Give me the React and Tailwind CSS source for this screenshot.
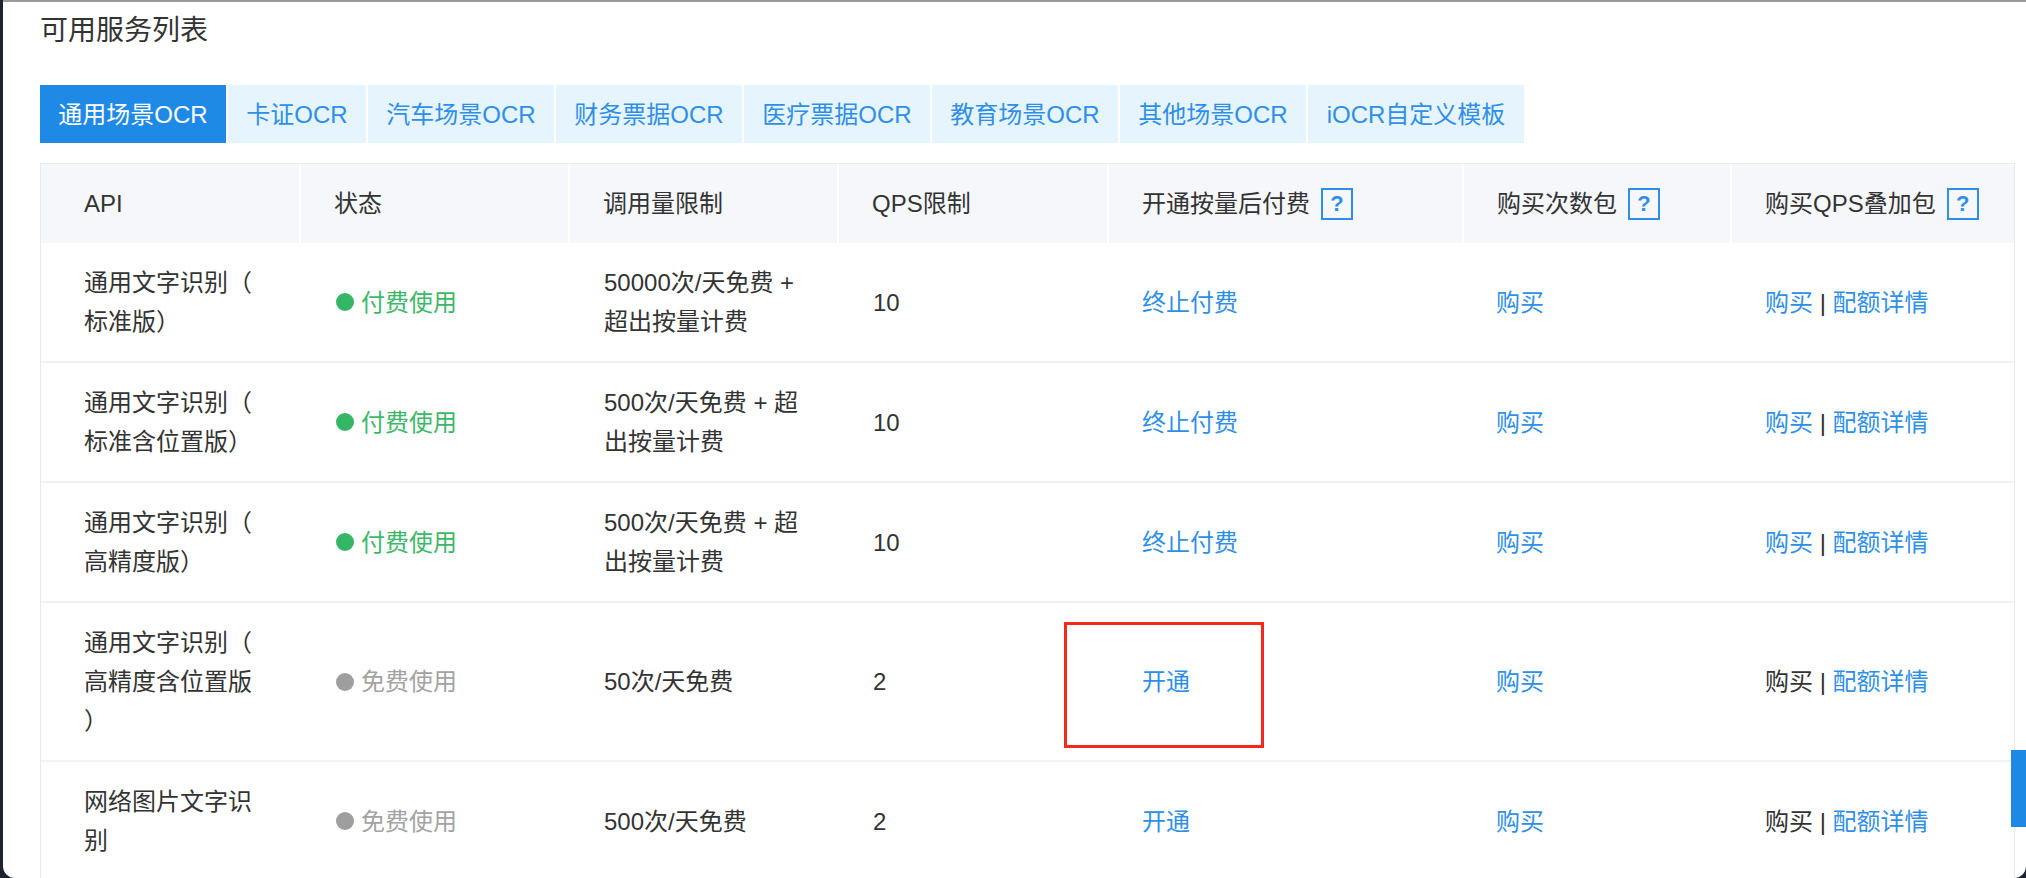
// Service list page (OCR API table)

const TABS = [
  { label: '通用场景OCR', w: 'w-[186px]', active: true },
  { label: '卡证OCR', w: 'w-[138px]' },
  { label: '汽车场景OCR', w: 'w-[186px]' },
  { label: '财务票据OCR', w: 'w-[186px]' },
  { label: '医疗票据OCR', w: 'w-[186px]' },
  { label: '教育场景OCR', w: 'w-[186px]' },
  { label: '其他场景OCR', w: 'w-[186px]' },
  { label: 'iOCR自定义模板', w: 'w-[216px]' },
];

const ROWS = [
  {
    name: ['通用文字识别（', '标准版）'],
    paid: true,
    limit: ['50000次/天免费 +', '超出按量计费'],
    qps: '10',
    action: '终止付费',
  },
  {
    name: ['通用文字识别（', '标准含位置版）'],
    paid: true,
    limit: ['500次/天免费 + 超', '出按量计费'],
    qps: '10',
    action: '终止付费',
  },
  {
    name: ['通用文字识别（', '高精度版）'],
    paid: true,
    limit: ['500次/天免费 + 超', '出按量计费'],
    qps: '10',
    action: '终止付费',
  },
  {
    name: ['通用文字识别（', '高精度含位置版', '）'],
    paid: false,
    limit: ['50次/天免费'],
    qps: '2',
    action: '开通',
    marked: true,
  },
  {
    name: ['网络图片文字识', '别'],
    paid: false,
    limit: ['500次/天免费'],
    qps: '2',
    action: '开通',
  },
];

const GRID = 'grid grid-cols-[260px_269px_269px_270px_355px_268px_284px]';
const LINK = 'text-[#2f8fe6]';

function HelpBox() {
  return (
    <span className="ml-[11px] w-8 h-8 border-2 border-[#2f8fe6] text-[#2f8fe6] font-bold text-[22px] leading-none flex items-center justify-center">
      ?
    </span>
  );
}

function Lines({ lines }) {
  return (
    <div>
      {lines.map((l, i) => (
        <div key={i}>{l}</div>
      ))}
    </div>
  );
}

function HeaderRow() {
  const cell = 'flex items-center py-5 border-r-2 border-white';
  return (
    <div className={`${GRID} bg-[#f5f7fa] border-t border-[#e8eaee] text-[#333]`}>
      <div className={`${cell} pl-[43px]`}>API</div>
      <div className={`${cell} pl-[33px]`}>状态</div>
      <div className={`${cell} pl-[33px]`}>调用量限制</div>
      <div className={`${cell} pl-[33px]`}>QPS限制</div>
      <div className={`${cell} pl-[33px]`}>
        开通按量后付费
        <HelpBox />
      </div>
      <div className={`${cell} pl-[33px]`}>
        购买次数包
        <HelpBox />
      </div>
      <div className="flex items-center py-5 pl-[33px]">
        购买QPS叠加包
        <HelpBox />
      </div>
    </div>
  );
}

function Row({ row }) {
  const cell = 'flex items-center py-5';
  return (
    <div className={`${GRID} border-b-2 border-[#eef1f6] text-[#333]`}>
      <div className={`${cell} pl-[43px] pr-[40px]`}>
        <Lines lines={row.name} />
      </div>
      <div className={`${cell} pl-[35px]`}>
        <span
          className={`w-[18px] h-[18px] rounded-full mr-[7px] ${
            row.paid ? 'bg-[#35b665]' : 'bg-[#9e9e9e]'
          }`}
        />
        <span className={row.paid ? 'text-[#3db868]' : 'text-[#a3a3a3]'}>
          {row.paid ? '付费使用' : '免费使用'}
        </span>
      </div>
      <div className={`${cell} pl-[34px]`}>
        <Lines lines={row.limit} />
      </div>
      <div className={`${cell} pl-[34px]`}>{row.qps}</div>
      <div className={`${cell} pl-[33px] relative`}>
        <span className={LINK}>{row.action}</span>
        {row.marked && (
          <div className="absolute left-[-45px] top-[19px] w-[200px] h-[126px] border-[3px] border-[#f5281c]" />
        )}
      </div>
      <div className={`${cell} pl-[32px]`}>
        <span className={LINK}>购买</span>
      </div>
      <div className={`${cell} pl-[33px] whitespace-pre`}>
        <span className={row.paid ? LINK : 'text-[#333]'}>购买</span>
        <span className="text-[#333]"> | </span>
        <span className={LINK}>配额详情</span>
      </div>
    </div>
  );
}

export default function App() {
  return (
    <div className="w-full h-[878px] bg-[#1c2331] overflow-hidden font-['Liberation_Sans','Noto_Sans_CJK_SC',sans-serif] text-[24px] leading-[39px]">
      <div className="relative ml-[3px] h-full bg-white border-t-2 border-[#9b9b9b] rounded-bl-[12px] rounded-br-[12px] overflow-hidden">
        <div className="pl-[37px]">
          <h1 className="mt-[9px] h-[40px] text-[28px] leading-[40px] text-[#333]">可用服务列表</h1>

          <div className="mt-[34px] flex gap-[2px]">
            {TABS.map((t) => (
              <div
                key={t.label}
                className={`${t.w} h-[58px] flex items-center justify-center ${
                  t.active ? 'bg-[#1f8ae6] text-white' : 'bg-[#e6f4fe] text-[#2f8fe6]'
                }`}
              >
                {t.label}
              </div>
            ))}
          </div>

          <div className="mt-[20px] w-[1975px] border-x border-[#e8eaee]">
            <HeaderRow />
            {ROWS.map((r, i) => (
              <Row key={i} row={r} />
            ))}
          </div>
        </div>

        {/* floating side tab */}
        <div className="absolute right-0 top-[748px] w-[15px] h-[77px] bg-[#1e88e5]" />
      </div>
    </div>
  );
}
